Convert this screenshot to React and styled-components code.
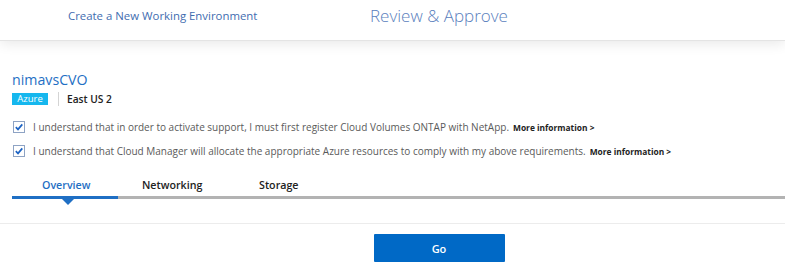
import React from "react";
import styled, { createGlobalStyle } from "styled-components";

const GlobalStyle = createGlobalStyle`
  html, body { margin: 0; padding: 0; background: #fff; }
  body { font-family: "Open Sans", "Noto Sans", sans-serif; }
`;

const Page = styled.div`
  width: 785px;
  height: 276px;
  background: #fff;
  overflow: hidden;
`;

const Header = styled.header`
  position: relative;
  z-index: 2;
  height: 40px;
  display: flex;
  align-items: center;
  padding-left: 68px;
  background: #fff;
  border-bottom: 1px solid #e4e4e4;
  box-shadow: 0 3px 12px rgba(0, 0, 0, 0.09);
`;

const Crumb = styled.span`
  font-size: 11.4px;
  color: #3f6db0;
  margin-top: -10px;
  width: 302px;
  white-space: nowrap;
`;

const Title = styled.span`
  font-size: 17px;
  font-weight: 300;
  color: #5a80bd;
  margin-top: -10px;
  white-space: nowrap;
`;

const Content = styled.main`
  padding: 29px 0 0 12px;
`;

const Name = styled.div`
  font-size: 14.2px;
  color: #1f6fc4;
  line-height: 20px;
`;

const Meta = styled.div`
  display: flex;
  align-items: center;
  margin-top: 2px;
  height: 14px;
`;

const Badge = styled.span`
  background: #16b7ee;
  color: #fff;
  font-size: 9.5px;
  line-height: 12px;
  height: 12px;
  padding: 0 5px;
  width: 26px;
  text-align: center;
`;

const Divider = styled.span`
  width: 1px;
  height: 14px;
  background: #d4d4d4;
  margin: 0 8px 0 10px;
`;

const Region = styled.span`
  font-size: 10.2px;
  font-weight: 600;
  color: #222;
`;

const Checks = styled.div`
  margin-top: 15px;
  display: flex;
  flex-direction: column;
  gap: 12px;
`;

const CheckRow = styled.label`
  display: flex;
  align-items: center;
  height: 12px;
  padding-left: 1px;
  white-space: nowrap;
`;

const Box = styled.span`
  width: 12px;
  height: 12px;
  box-sizing: border-box;
  border: 1px solid #8ea3c4;
  background: #fff;
  display: inline-flex;
  align-items: center;
  justify-content: center;
  margin-right: 8px;
`;

const CheckText = styled.span`
  font-size: 10px;
  color: #5a5a5a;
`;

const More = styled.a`
  font-size: 8.4px;
  font-weight: 700;
  color: #222;
  margin-left: 4px;
  text-decoration: none;
`;

const Tabs = styled.nav`
  margin-top: 21px;
  display: flex;
  border-bottom: 3px solid #b3b3b3;
`;

const Tab = styled.div`
  position: relative;
  width: ${(p) => p.$w}px;
  font-size: 10.7px;
  line-height: 15px;
  font-weight: 600;
  color: ${(p) => (p.$active ? "#1f6fc4" : "#222")};
  padding: 0 0 3px ${(p) => p.$pl}px;
  box-sizing: border-box;
  white-space: nowrap;
  &::after {
    content: "";
    display: ${(p) => (p.$active ? "block" : "none")};
    position: absolute;
    left: 0;
    right: 0;
    bottom: -3px;
    height: 3px;
    background: #1f6fc4;
  }
  &::before {
    content: "";
    display: ${(p) => (p.$active ? "block" : "none")};
    position: absolute;
    left: 50px;
    bottom: -9px;
    width: 0;
    height: 0;
    border-left: 6px solid transparent;
    border-right: 6px solid transparent;
    border-top: 6px solid #1f6fc4;
  }
`;

const Footer = styled.div`
  margin-top: 24px;
  border-top: 1px solid #ececec;
  display: flex;
  justify-content: center;
  padding: 10px 0 0 93px;
  width: 785px;
  box-sizing: border-box;
`;

const GoButton = styled.button`
  width: 131px;
  height: 28px;
  border: none;
  border-radius: 1px;
  background: #0069c6;
  color: #fff;
  font-family: inherit;
  font-size: 11px;
  font-weight: 600;
  cursor: pointer;
`;

const Check = () => (
  <svg width="10" height="10" viewBox="0 0 10 10">
    <path d="M1.8 5.2 L4 7.4 L8.3 2.4" fill="none" stroke="#1c63c4" strokeWidth="1.7" />
  </svg>
);

export default function App() {
  return (
    <Page>
      <GlobalStyle />
      <Header>
        <Crumb>Create a New Working Environment</Crumb>
        <Title>Review &amp; Approve</Title>
      </Header>
      <Content>
        <Name>nimavsCVO</Name>
        <Meta>
          <Badge>Azure</Badge>
          <Divider />
          <Region>East US 2</Region>
        </Meta>
        <Checks>
          <CheckRow>
            <Box><Check /></Box>
            <CheckText>
              I understand that in order to activate support, I must first register Cloud Volumes ONTAP with NetApp.
            </CheckText>
            <More href="#">More information &gt;</More>
          </CheckRow>
          <CheckRow>
            <Box><Check /></Box>
            <CheckText>
              I understand that Cloud Manager will allocate the appropriate Azure resources to comply with my above requirements.
            </CheckText>
            <More href="#">More information &gt;</More>
          </CheckRow>
        </Checks>
        <Tabs>
          <Tab $active $w={106} $pl={30}>Overview</Tab>
          <Tab $w={117} $pl={24}>Networking</Tab>
          <Tab $w={100} $pl={24}>Storage</Tab>
        </Tabs>
      </Content>
      <Footer>
        <GoButton>Go</GoButton>
      </Footer>
    </Page>
  );
}
